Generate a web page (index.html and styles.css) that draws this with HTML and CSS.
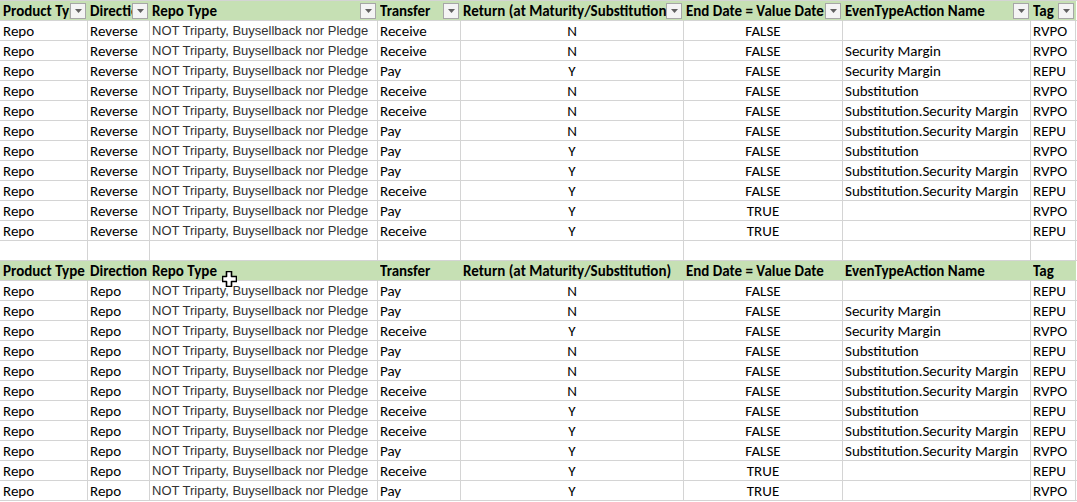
FILE: index.html
```html
<!DOCTYPE html>
<html>
<head>
<meta charset="utf-8">
<link rel="stylesheet" href="styles.css">
</head>
<body>
<div class="sheet">
  <div class="row head">
    <div class="c c1"><span class="t">Product Type</span><span class="dd"><svg width="7" height="4" viewBox="0 0 7 4"><path d="M0 0H7L3.5 4Z"/></svg></span></div>
    <div class="c"><span class="t">Direction</span><span class="dd"><svg width="7" height="4" viewBox="0 0 7 4"><path d="M0 0H7L3.5 4Z"/></svg></span></div>
    <div class="c"><span class="t">Repo Type</span><span class="dd"><svg width="7" height="4" viewBox="0 0 7 4"><path d="M0 0H7L3.5 4Z"/></svg></span></div>
    <div class="c"><span class="t">Transfer</span><span class="dd"><svg width="7" height="4" viewBox="0 0 7 4"><path d="M0 0H7L3.5 4Z"/></svg></span></div>
    <div class="c"><span class="t">Return (at Maturity/Substitution)</span><span class="dd"><svg width="7" height="4" viewBox="0 0 7 4"><path d="M0 0H7L3.5 4Z"/></svg></span></div>
    <div class="c"><span class="t">End Date = Value Date</span><span class="dd"><svg width="7" height="4" viewBox="0 0 7 4"><path d="M0 0H7L3.5 4Z"/></svg></span></div>
    <div class="c"><span class="t">EvenTypeAction Name</span><span class="dd"><svg width="7" height="4" viewBox="0 0 7 4"><path d="M0 0H7L3.5 4Z"/></svg></span></div>
    <div class="c"><span class="t">Tag</span><span class="dd"><svg width="7" height="4" viewBox="0 0 7 4"><path d="M0 0H7L3.5 4Z"/></svg></span></div>
    <div class="c blank"></div>
  </div>
  <div class="row"><div class="c c1">Repo</div><div class="c">Reverse</div><div class="c rt">NOT Triparty, Buysellback nor Pledge</div><div class="c">Receive</div><div class="c ctr">N</div><div class="c ctr">FALSE</div><div class="c"></div><div class="c">RVPO</div><div class="c"></div></div>
  <div class="row"><div class="c c1">Repo</div><div class="c">Reverse</div><div class="c rt">NOT Triparty, Buysellback nor Pledge</div><div class="c">Receive</div><div class="c ctr">N</div><div class="c ctr">FALSE</div><div class="c">Security Margin</div><div class="c">RVPO</div><div class="c"></div></div>
  <div class="row"><div class="c c1">Repo</div><div class="c">Reverse</div><div class="c rt">NOT Triparty, Buysellback nor Pledge</div><div class="c">Pay</div><div class="c ctr">Y</div><div class="c ctr">FALSE</div><div class="c">Security Margin</div><div class="c">REPU</div><div class="c"></div></div>
  <div class="row"><div class="c c1">Repo</div><div class="c">Reverse</div><div class="c rt">NOT Triparty, Buysellback nor Pledge</div><div class="c">Receive</div><div class="c ctr">N</div><div class="c ctr">FALSE</div><div class="c">Substitution</div><div class="c">RVPO</div><div class="c"></div></div>
  <div class="row"><div class="c c1">Repo</div><div class="c">Reverse</div><div class="c rt">NOT Triparty, Buysellback nor Pledge</div><div class="c">Receive</div><div class="c ctr">N</div><div class="c ctr">FALSE</div><div class="c">Substitution.Security Margin</div><div class="c">RVPO</div><div class="c"></div></div>
  <div class="row"><div class="c c1">Repo</div><div class="c">Reverse</div><div class="c rt">NOT Triparty, Buysellback nor Pledge</div><div class="c">Pay</div><div class="c ctr">N</div><div class="c ctr">FALSE</div><div class="c">Substitution.Security Margin</div><div class="c">REPU</div><div class="c"></div></div>
  <div class="row"><div class="c c1">Repo</div><div class="c">Reverse</div><div class="c rt">NOT Triparty, Buysellback nor Pledge</div><div class="c">Pay</div><div class="c ctr">Y</div><div class="c ctr">FALSE</div><div class="c">Substitution</div><div class="c">RVPO</div><div class="c"></div></div>
  <div class="row"><div class="c c1">Repo</div><div class="c">Reverse</div><div class="c rt">NOT Triparty, Buysellback nor Pledge</div><div class="c">Pay</div><div class="c ctr">Y</div><div class="c ctr">FALSE</div><div class="c">Substitution.Security Margin</div><div class="c">RVPO</div><div class="c"></div></div>
  <div class="row"><div class="c c1">Repo</div><div class="c">Reverse</div><div class="c rt">NOT Triparty, Buysellback nor Pledge</div><div class="c">Receive</div><div class="c ctr">Y</div><div class="c ctr">FALSE</div><div class="c">Substitution.Security Margin</div><div class="c">REPU</div><div class="c"></div></div>
  <div class="row"><div class="c c1">Repo</div><div class="c">Reverse</div><div class="c rt">NOT Triparty, Buysellback nor Pledge</div><div class="c">Pay</div><div class="c ctr">Y</div><div class="c ctr">TRUE</div><div class="c"></div><div class="c">RVPO</div><div class="c"></div></div>
  <div class="row"><div class="c c1">Repo</div><div class="c">Reverse</div><div class="c rt">NOT Triparty, Buysellback nor Pledge</div><div class="c">Receive</div><div class="c ctr">Y</div><div class="c ctr">TRUE</div><div class="c"></div><div class="c">REPU</div><div class="c"></div></div>
  <div class="row"><div class="c c1"></div><div class="c"></div><div class="c"></div><div class="c"></div><div class="c"></div><div class="c"></div><div class="c"></div><div class="c"></div><div class="c"></div></div>
  <div class="row head">
    <div class="c c1"><span class="t">Product Type</span></div>
    <div class="c"><span class="t">Direction</span></div>
    <div class="c"><span class="t">Repo Type</span></div>
    <div class="c"><span class="t">Transfer</span></div>
    <div class="c"><span class="t">Return (at Maturity/Substitution)</span></div>
    <div class="c"><span class="t">End Date = Value Date</span></div>
    <div class="c"><span class="t">EvenTypeAction Name</span></div>
    <div class="c"><span class="t">Tag</span></div>
    <div class="c blank"></div>
  </div>
  <div class="row"><div class="c c1">Repo</div><div class="c">Repo</div><div class="c rt">NOT Triparty, Buysellback nor Pledge</div><div class="c">Pay</div><div class="c ctr">N</div><div class="c ctr">FALSE</div><div class="c"></div><div class="c">REPU</div><div class="c"></div></div>
  <div class="row"><div class="c c1">Repo</div><div class="c">Repo</div><div class="c rt">NOT Triparty, Buysellback nor Pledge</div><div class="c">Pay</div><div class="c ctr">N</div><div class="c ctr">FALSE</div><div class="c">Security Margin</div><div class="c">REPU</div><div class="c"></div></div>
  <div class="row"><div class="c c1">Repo</div><div class="c">Repo</div><div class="c rt">NOT Triparty, Buysellback nor Pledge</div><div class="c">Receive</div><div class="c ctr">Y</div><div class="c ctr">FALSE</div><div class="c">Security Margin</div><div class="c">RVPO</div><div class="c"></div></div>
  <div class="row"><div class="c c1">Repo</div><div class="c">Repo</div><div class="c rt">NOT Triparty, Buysellback nor Pledge</div><div class="c">Pay</div><div class="c ctr">N</div><div class="c ctr">FALSE</div><div class="c">Substitution</div><div class="c">REPU</div><div class="c"></div></div>
  <div class="row"><div class="c c1">Repo</div><div class="c">Repo</div><div class="c rt">NOT Triparty, Buysellback nor Pledge</div><div class="c">Pay</div><div class="c ctr">N</div><div class="c ctr">FALSE</div><div class="c">Substitution.Security Margin</div><div class="c">REPU</div><div class="c"></div></div>
  <div class="row"><div class="c c1">Repo</div><div class="c">Repo</div><div class="c rt">NOT Triparty, Buysellback nor Pledge</div><div class="c">Receive</div><div class="c ctr">N</div><div class="c ctr">FALSE</div><div class="c">Substitution.Security Margin</div><div class="c">RVPO</div><div class="c"></div></div>
  <div class="row"><div class="c c1">Repo</div><div class="c">Repo</div><div class="c rt">NOT Triparty, Buysellback nor Pledge</div><div class="c">Receive</div><div class="c ctr">Y</div><div class="c ctr">FALSE</div><div class="c">Substitution</div><div class="c">REPU</div><div class="c"></div></div>
  <div class="row"><div class="c c1">Repo</div><div class="c">Repo</div><div class="c rt">NOT Triparty, Buysellback nor Pledge</div><div class="c">Receive</div><div class="c ctr">Y</div><div class="c ctr">FALSE</div><div class="c">Substitution.Security Margin</div><div class="c">REPU</div><div class="c"></div></div>
  <div class="row"><div class="c c1">Repo</div><div class="c">Repo</div><div class="c rt">NOT Triparty, Buysellback nor Pledge</div><div class="c">Pay</div><div class="c ctr">Y</div><div class="c ctr">FALSE</div><div class="c">Substitution.Security Margin</div><div class="c">RVPO</div><div class="c"></div></div>
  <div class="row"><div class="c c1">Repo</div><div class="c">Repo</div><div class="c rt">NOT Triparty, Buysellback nor Pledge</div><div class="c">Receive</div><div class="c ctr">Y</div><div class="c ctr">TRUE</div><div class="c"></div><div class="c">REPU</div><div class="c"></div></div>
  <div class="row"><div class="c c1">Repo</div><div class="c">Repo</div><div class="c rt">NOT Triparty, Buysellback nor Pledge</div><div class="c">Pay</div><div class="c ctr">Y</div><div class="c ctr">TRUE</div><div class="c"></div><div class="c">RVPO</div><div class="c"></div></div>
  <svg class="cursor" width="15" height="16" viewBox="0 0 15 16"><path d="M4.5 0.5H9.5V5.5H14.5V10.5H9.5V15.5H4.5V10.5H0.5V5.5H4.5Z" fill="#fff" stroke="#000" stroke-width="1.6" stroke-linejoin="round"/></svg>
</div>
</body>
</html>
```
FILE: styles.css
```css
html, body {
  margin: 0;
  padding: 0;
  background: #fff;
}
.sheet {
  position: relative;
  border-top: 1px solid #d4d4d4;
  font-family: Carlito, Lato, "Liberation Sans", sans-serif;
  font-size: 15px;
  color: #000;
}
.row {
  display: grid;
  grid-template-columns: 88px 62px 228px 83px 223px 159px 188px 45px 1fr;
  height: 20px;
}
.c {
  box-sizing: border-box;
  height: 100%;
  border-right: 1px solid #d4d4d4;
  border-bottom: 1px solid #d4d4d4;
  padding-left: 2px;
  padding-top: 1px;
  display: flex;
  align-items: center;
  white-space: nowrap;
  overflow: hidden;
  line-height: 18px;
}
.c1 {
  padding-left: 3px;
}
.ctr {
  justify-content: center;
  padding-left: 0;
}
.rt {
  font-family: "Liberation Sans", Arial, sans-serif;
  font-size: 13px;
  color: #333;
}
.head .c {
  background: #c6e0b4;
  border-right-color: #c6e0b4;
  font-weight: bold;
}
.head .c.blank {
  background: #fff;
  border-right-color: #d4d4d4;
}
.t {
  flex: 1;
  overflow: hidden;
  white-space: nowrap;
}
.dd {
  flex: none;
  box-sizing: border-box;
  width: 16px;
  height: 16px;
  margin-right: 1px;
  margin-top: -1px;
  border: 1px solid #a6a6a6;
  background: #f4f4f4;
  display: flex;
  align-items: center;
  justify-content: center;
}
.dd svg {
  fill: #606060;
}
.cursor {
  position: absolute;
  left: 222px;
  top: 270px;
}
```
